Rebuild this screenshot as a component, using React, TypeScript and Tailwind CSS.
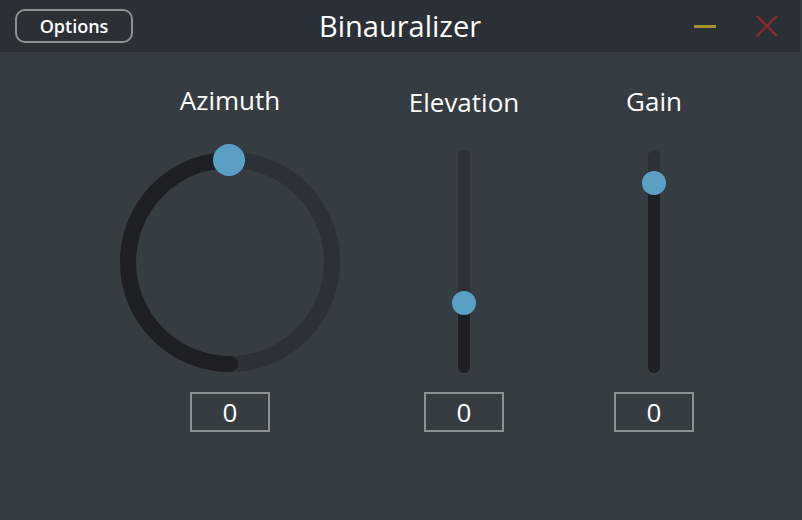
import React from 'react';

const font = { fontFamily: '"Open Sans", "DejaVu Sans", sans-serif' };

function Knob() {
  // azimuth dial, dark arc runs from bottom round the left side up to the thumb
  return (
    <svg width="240" height="240" viewBox="0 0 240 240">
      <circle cx="120" cy="120" r="102" fill="none" stroke="#2b3137" strokeWidth="16" />
      <path d="M 120 222 A 102 102 0 0 1 120 18" fill="none" stroke="#1c2024" strokeWidth="16" strokeLinecap="round" />
      <circle cx="119" cy="18" r="16" fill="#5aa0c5" />
    </svg>
  );
}

function VSlider({ pos }: { pos: number }) {
  // pos = thumb centre from the top of the track, in px
  return (
    <div className="relative w-[12px] h-[223px] rounded-full bg-[#2b3137]">
      <div className="absolute left-0 right-0 bottom-0 rounded-full bg-[#1c2024]" style={{ top: pos }} />
      <div className="absolute left-1/2 -translate-x-1/2 -translate-y-1/2 w-[24px] h-[24px] rounded-full bg-[#5aa0c5]" style={{ top: pos }} />
    </div>
  );
}

function ValueBox() {
  return (
    <div className="w-[80px] h-[40px] border-2 border-[#8c9194] flex items-center justify-center text-white text-[26px] leading-none">
      0
    </div>
  );
}

export default function App() {
  return (
    <div className="w-[802px] h-[520px] bg-[#353c42] overflow-hidden" style={font}>
      {/* HEADER */}
      <div className="w-[800px] h-[52px] bg-[#2a3036] relative flex items-center">
        <button className="ml-[15px] w-[118px] h-[34px] rounded-[10px] border-2 border-[#8c9194] text-white text-[18px] font-semibold leading-none">
          Options
        </button>
        <div className="absolute left-0 right-0 top-0 h-[50px] flex items-center justify-center pointer-events-none">
          <span className="text-white text-[29px] leading-none">Binauralizer</span>
        </div>
        <div className="ml-auto flex items-center gap-[40px] mr-[22px]">
          <div className="w-[22px] h-[3px] bg-[#a88f2e]" />
          <svg width="22" height="22" viewBox="0 0 22 22">
            <path d="M1 1 L21 21 M21 1 L1 21" stroke="#8f2a2a" strokeWidth="2.2" />
          </svg>
        </div>
      </div>

      {/* CONTROLS */}
      <div className="flex pl-[110px] pt-[33px]">
        <div className="w-[240px] flex flex-col items-center">
          <div className="h-[30px] flex items-center text-white text-[26px] font-medium">Azimuth</div>
          <div className="h-[277px] pt-[27px] -ml-[1px]">
            <Knob />
          </div>
          <ValueBox />
        </div>

        <div className="w-[120px] ml-[54px] flex flex-col items-center">
          <div className="h-[30px] mt-[2px] -mb-[2px] flex items-center text-white text-[26px] font-medium">Elevation</div>
          <div className="h-[277px] pt-[35px]">
            <VSlider pos={153} />
          </div>
          <ValueBox />
        </div>

        <div className="w-[120px] ml-[70px] flex flex-col items-center">
          <div className="h-[30px] mt-[1px] -mb-[1px] flex items-center text-white text-[26px] font-medium">Gain</div>
          <div className="h-[277px] pt-[35px]">
            <VSlider pos={33} />
          </div>
          <ValueBox />
        </div>
      </div>
    </div>
  );
}
